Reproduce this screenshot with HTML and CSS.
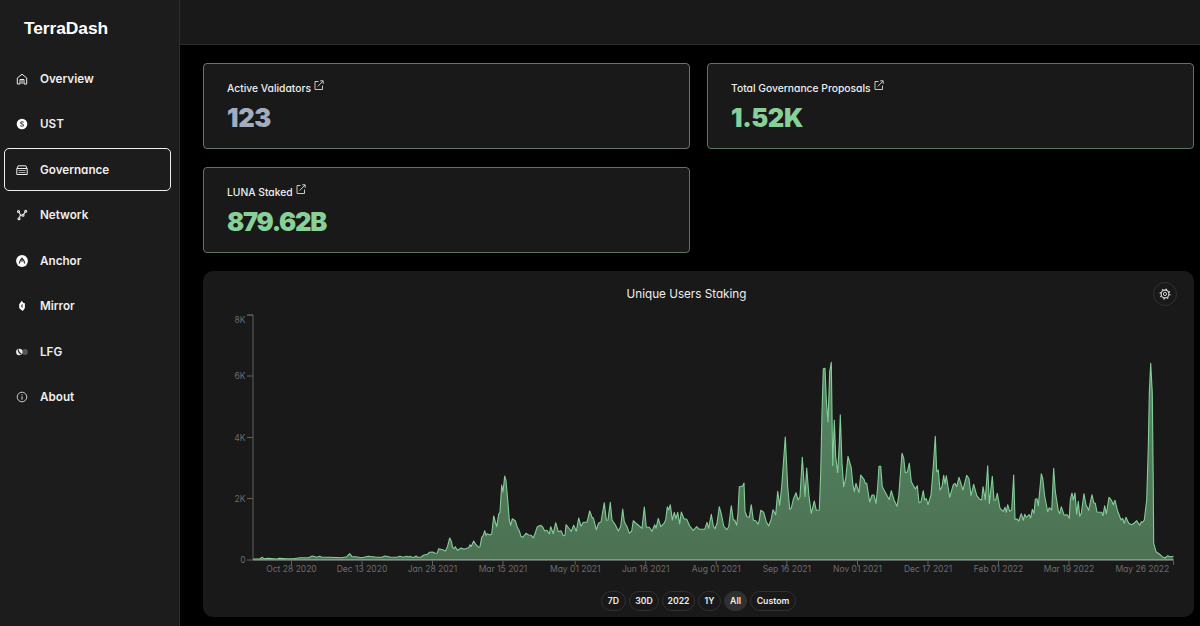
FILE: index.html
```html
<!DOCTYPE html>
<html lang="en">
<head>
    <meta charset="UTF-8">
    <meta name="viewport" content="width=device-width, initial-scale=1.0">
    <title>TerraDash - Governance</title>
    <link rel="stylesheet" href="styles.css">
</head>
<body>
    <aside class="sidebar">
        <h1 class="brand">TerraDash</h1>
        <nav class="nav">
            <a class="nav-item">
                <svg class="nav-icon" viewBox="0 0 12 12" fill="none" stroke="#eee" stroke-width="1"><path d="M1.300 11V5L6 1.200 10.700 5v6H8V6.500H4V11zM6 7v4"/></svg>
                <span>Overview</span>
            </a>
            <a class="nav-item">
                <svg class="nav-icon" viewBox="0 0 12 12"><circle cx="6" cy="6" r="5.3" fill="#fff"/><path d="M7.6 4.4C7 3.5 4.6 3.5 4.6 4.8S7.5 6 7.5 7.2 5 8.6 4.3 7.500" fill="none" stroke="#444" stroke-width="1.1"/></svg>
                <span>UST</span>
            </a>
            <a class="nav-item active">
                <svg class="nav-icon" viewBox="0 0 12 12" fill="none" stroke="#eee"><path d="M2.200 1.800h7.600l1.400 3v5.700H.8V4.800z"/><path d="M1 4.500h10"/><path d="M2.500 6.500h7M2.500 8.500h7" stroke="#aaa"/></svg>
                <span>Governance</span>
            </a>
            <a class="nav-item">
                <svg class="nav-icon" viewBox="0 0 12 12" fill="none" stroke="#eee" stroke-width="1.1"><circle cx="2.5" cy="2.5" r="1"/><circle cx="9.7" cy="2.3" r="1"/><circle cx="3" cy="9.700" r="1"/><circle cx="7" cy="6.300" r="1"/><path d="M3 3.300 4.500 6 6 6.300M9.300 3.200 7.500 5.300M3.300 8.800 4.500 6"/></svg>
                <span>Network</span>
            </a>
            <a class="nav-item">
                <svg class="nav-icon" viewBox="0 0 12 12"><circle cx="6" cy="6" r="5.9" fill="#fff"/><path d="M3.300 8.500C3.500 6 4.500 4.500 6 3.200 7.600 4.500 8.600 6 8.700 8.500M6 5.200v1.600" fill="none" stroke="#333" stroke-width="1.400"/></svg>
                <span>Anchor</span>
            </a>
            <a class="nav-item">
                <svg class="nav-icon" viewBox="0 0 12 12"><path d="M5.800.8 7.500 3l1.400.3v4.700L6.800 11 5 9.700 3.200 8V4.200z" fill="#fff"/><path d="M6.500 4v4L5.400 7V5z" fill="#222"/></svg>
                <span>Mirror</span>
            </a>
            <a class="nav-item">
                <svg class="nav-icon" viewBox="0 0 12 12"><circle cx="8.9" cy="6" r="3" fill="#555"/><circle cx="3.3" cy="6" r="3.200" fill="#eee"/><path d="M2 3.400C2.500 6 3.500 7.500 5.500 8.500" fill="none" stroke="#222" stroke-width="1.200"/></svg>
                <span>LFG</span>
            </a>
            <a class="nav-item">
                <svg class="nav-icon" viewBox="0 0 12 12" fill="none" stroke="#ddd"><circle cx="6" cy="6" r="4.8" stroke-width=".9"/><path d="M6 5.300v3.400M6 3.300v1"/></svg>
                <span>About</span>
            </a>
        </nav>
    </aside>

    <div class="page">
        <header class="topbar"></header>
        <main class="content">
            <section class="stats">
                <div class="stat neutral">
                    <div class="stat-title"><span>Active Validators</span><svg class="ext" viewBox="0 0 10 10"><path d="M4.500 1.500H1v8h7.500V5.500M3.700 6.500 9 1M6.200.8h3v3"/></svg></div>
                    <div class="stat-value">123</div>
                </div>
                <div class="stat">
                    <div class="stat-title"><span>Total Governance Proposals</span><svg class="ext" viewBox="0 0 10 10"><path d="M4.500 1.500H1v8h7.500V5.500M3.700 6.500 9 1M6.200.8h3v3"/></svg></div>
                    <div class="stat-value">1.52K</div>
                </div>
                <div class="stat">
                    <div class="stat-title"><span>LUNA Staked</span><svg class="ext" viewBox="0 0 10 10"><path d="M4.500 1.500H1v8h7.500V5.500M3.700 6.500 9 1M6.200.8h3v3"/></svg></div>
                    <div class="stat-value long">879.62B</div>
                </div>
            </section>

            <section class="panel">
                <div class="panel-head">
                    <span></span>
                    <h2 class="panel-title">Unique Users Staking</h2>
                    <button class="settings" aria-label="Settings">
                        <svg viewBox="0 0 12 12" fill="none" stroke="#ddd"><circle cx="6" cy="6" r="3.900" stroke-width="1.100"/><circle cx="6" cy="6" r="1.600" stroke-width=".9"/><circle cx="6" cy="6" r="4.900" stroke-width="1.100" stroke-dasharray="1.500 2.348"/></svg>
                    </button>
                </div>
                <svg class="chart" id="chart" viewBox="203 310 991 270">
                    <defs>
                        <linearGradient id="fill" gradientUnits="userSpaceOnUse" x1="0" y1="360" x2="0" y2="560">
                            <stop offset="0" stop-color="#548763"/>
                            <stop offset="1" stop-color="#4c7153"/>
                        </linearGradient>
                    </defs>
                    <path id="area" fill="url(#fill)"/>
                    <g id="axes" class="axes"></g>
                    <path id="line" class="line"/>
                    <path class="line base" d="M253 559.500H1173.500"/>
                </svg>
                <div class="ranges">
                    <button class="range">7D</button>
                    <button class="range w30">30D</button>
                    <button class="range w33">2022</button>
                    <button class="range w23">1Y</button>
                    <button class="range w23 selected">All</button>
                    <button class="range w46">Custom</button>
                </div>
            </section>
        </main>
    </div>

    <script src="chart.js"></script>
</body>
</html>
```
FILE: chart.js
```js
(function() {
    const BASE = 560
    const LEFT = 253

    // each part: origin in the plot, then x,y pairs in thirds of a unit
    const parts = [
        [220, 460, '100,297 120,296 127,292 132,296 145,295 170,297 178,295 200,296 220,296 240,293 265,293 277,288 290,292 299,289 305,292 330,292 365,293 380,290 389,281 396,290 407,290 425,293 445,289 470,292 485,292 495,288 510,291 530,292 540,289 550,292 560,289 565,292 570,289 575,292 583,292 588,288 593,292 603,291 612,285 622,283 628,277 638,276 645,280 652,279 656,266 668,269 676,273 682,262 689,234'],
        [450, 460, '4,244 8,262 12,266 16,260 22,271 34,264 42,268 52,264 56,263 60,254 63,260 71,243 78,254 86,262 90,260 95,232 100,226 104,212 108,226 112,221 120,225 125,222 131,168 136,186 140,200 146,162 150,156 155,75 159,96 164,48 168,62 173,120 178,180 182,196 187,176 196,182 202,202 208,213 213,229 218,232 228,220 236,225 244,226 250,234 256,218 262,200 272,196 278,201 284,213 291,211 298,222 302,200 310,221 317,188 325,215 333,212 340,227 345,226 348,194 356,204 364,214 371,196 379,214 386,174 393,199 400,187 411,187 419,153 426,172 430,174 439,209 446,189 453,186 463,128 469,181 474,180 481,127 486,180 496,194 505,213 512,199 518,147 523,185 531,200 538,220 545,213 550,182 557,189 568,198 576,205 583,141 589,202 598,202 606,214 614,194 618,205 625,175 632,200 642,190 647,180 652,140 656,150 661,134 667,180 673,157 678,176 683,157 689,192 694,156 702,176 710,178 719,198'],
        [690, 340, '10,571 20,560 28,568 44,568 51,547 56,565 64,523 70,558 75,566 81,550 88,500 94,522 101,558 110,569 116,560 124,497 130,540 134,540 140,556 144,520 148,440 158,438 162,429 165,515 171,530 178,532 184,494 190,540 198,543 204,553 208,540 212,511 221,517 229,545 236,558 243,540 249,509 257,524 263,454 269,496 275,440 286,291 293,440 299,508 304,504 310,478 318,458 324,480 330,470 337,352 345,470 350,384 357,470 364,520 373,483 379,511 388,510 392,400 396,220 400,86 405,85 409,180 414,246 419,95 424,67 428,377 433,240 437,350 443,398 448,310 451,224 456,370 461,440 467,415 474,349 484,384 488,430 493,455 498,430 507,458 512,405 522,418 526,430 530,430 539,486 546,465 552,465 558,491 563,440 567,379 572,379 577,440 585,455 598,479 604,452 612,480 621,499 626,470 636,340 641,355 646,398 652,396 658,370 664,425 676,447 682,437 687,488 693,485 700,452 704,480 709,476 714,494 723,465 730,380 736,289 740,395 745,390 750,450 756,440 761,406 765,432 769,407'],
        [940, 340, '29,472 40,434 45,430 50,440 57,412 69,450 80,406 87,416 93,467 101,433 110,466 119,478 125,480 129,440 136,480 143,377 148,491 157,409 162,480 167,480 172,460 180,505 190,514 195,502 199,517 203,494 209,514 215,510 221,405 225,538 232,537 236,544 244,521 250,541 254,523 259,532 268,524 272,534 277,508 282,520 286,478 291,476 295,498 304,401 308,415 314,470 323,515 328,503 335,510 341,385 346,455 355,512 359,521 364,500 372,525 382,524 388,535 391,480 396,459 400,480 405,459 410,523 415,484 419,529 424,520 432,461 438,495 446,511 456,464 461,488 466,490 471,516 485,517 489,527 494,497 499,522 507,472 515,482 520,494 525,481 532,510 543,540 548,535 553,550 558,532 566,550 575,554 583,549 590,542 599,556 604,545 608,547 613,540 620,480 625,320 628,160 632,70 637,160 640,450 641,610 648,635 658,642 667,650 675,654 683,647 690,650 700,649']
    ]

    const points = parts.flatMap(([ox, oy, list]) => list.split(' ').map(pair => {
        const [x, y] = pair.split(',').map(Number)
        return (ox + x / 3).toFixed(1) + ' ' + (oy + y / 3).toFixed(1)
    }))
    const right = points[points.length - 1].split(' ')[0]

    document.getElementById('line').setAttribute('d', 'M' + points.join('L'))
    document.getElementById('area').setAttribute('d', `M${LEFT} ${BASE}L${points.join('L')}L${right} ${BASE}Z`)

    let axes = `<path d="M247 315H253V560M253 560.500H1173.500V565"/>`
    const yTicks = [['8K', 315, 323], ['6K', 376, 379], ['4K', 437.5, 440.5], ['2K', 498.5, 501.5], ['0', 560, 563]]
    yTicks.forEach(([label, y, textY]) => {
        axes += `<path d="M247 ${y}H253"/><text x="245.500" y="${textY}" text-anchor="end">${label}</text>`
    })

    const dates = ['Oct 28 2020', 'Dec 13 2020', 'Jan 28 2021', 'Mar 15 2021', 'May 01 2021', 'Jun 16 2021', 'Aug 01 2021', 'Sep 16 2021', 'Nov 01 2021', 'Dec 17 2021', 'Feb 01 2022', 'Mar 19 2022', 'May 26 2022']
    const xTicks = [291.5, 362, 432.5, 503, 575.2, 645.7, 716.3, 786.8, 857.5, 928, 998.5, 1069, 1142.3]
    dates.forEach((label, i) => {
        if (i < 12) axes += `<path d="M${xTicks[i]} 561V565"/>`
        axes += `<text x="${xTicks[i]}" y="572" text-anchor="middle">${label}</text>`
    })
    document.getElementById('axes').innerHTML = axes
})()
```
FILE: styles.css
```css
* {
    box-sizing: border-box;
}
body {
    margin: 0;
    height: 626px;
    display: flex;
    overflow: hidden;
    background-color: #000;
    color: #eee;
    font-family: Inter, "Liberation Sans", sans-serif;
    font-feature-settings: "cv11";
}
.sidebar {
    width: 180px;
    flex: none;
    background-color: #1c1c1c;
    border-right: 1px solid #2c2f2f;
}
.brand {
    margin: 0;
    padding: 18px 0 0 24px;
    height: 57px;
    font: bold 17.4px/21px "Liberation Sans", Arial, sans-serif;
    letter-spacing: -0.08px;
    color: #fff;
}
.nav {
    display: flex;
    flex-direction: column;
    gap: 2.5px;
    padding: 0 8px 0 4px;
    margin-top: -0.5px;
}
.nav-item {
    height: 43px;
    display: flex;
    align-items: center;
    gap: 12px;
    padding: 1px 0 0 11px;
    border: 1px solid transparent;
    border-radius: 5px;
    font-size: 11.7px;
    font-weight: 600;
}
.nav-item.active {
    border-color: #eee;
}
.nav-icon {
    width: 12px;
    height: 12px;
}
.page {
    flex: 1;
    min-width: 0;
}
.topbar {
    height: 45px;
    background-color: #191919;
    border-bottom: 1px solid #2c2f2f;
}
.content {
    padding: 18px 6px 0 23px;
}
.stats {
    display: grid;
    grid-template-columns: 1fr 1fr;
    gap: 18px 17px;
}
.stat {
    height: 86px;
    padding: 15px 23px;
    background-color: #191919;
    border: 1px solid #56785f;
    border-radius: 4px;
    color: #87d098;
}
.stat.neutral {
    border-color: #6b7372;
    color: #a3adbd;
}
.stat-title {
    display: flex;
    gap: 3px;
    color: #eee;
    font-size: 10.3px;
    line-height: 18px;
    font-weight: 500;
}
.ext {
    width: 10px;
    height: 10px;
    margin-top: 1px;
    fill: none;
    stroke: #ddd;
    stroke-width: 0.9;
}
.stat-value {
    margin-top: 3px;
    font-size: 25.5px;
    line-height: 36px;
    font-weight: 900;
    letter-spacing: -0.4px;
}
.stat-value.long {
    letter-spacing: -1.3px;
}
.panel {
    height: 346px;
    margin-top: 18px;
    background-color: #191919;
    border-radius: 10px;
}
.panel-head {
    display: grid;
    grid-template-columns: 24px 1fr 24px;
    align-items: center;
    height: 39px;
    padding: 7px 17px 0;
}
.panel-title {
    margin: 0 0 0 -23px;
    padding-right: 23px;
    text-align: center;
    font-size: 11.7px;
    font-weight: 400;
    transform: translateX(11px);
}
.settings {
    display: flex;
    align-items: center;
    justify-content: center;
    width: 24px;
    height: 24px;
    padding: 0;
    background: none;
    border: 1px solid #303030;
    border-radius: 50%;
}
.settings svg {
    width: 12px;
    height: 12px;
}
.chart {
    display: block;
    width: 991px;
    height: 270px;
}
.line {
    fill: none;
    stroke: #83cd98;
    stroke-width: 1.1;
    stroke-linejoin: round;
}
.line.base {
    stroke: #6fa57d;
    stroke-width: 1;
}
.axes path {
    fill: none;
    stroke: #606060;
    stroke-width: 1;
}
.axes text {
    fill: #6c6c6c;
    font-size: 8.5px;
}
.ranges {
    display: flex;
    justify-content: center;
    gap: 3px;
    padding-top: 11px;
}
.range {
    width: 25px;
    height: 20px;
    padding: 0;
    background: none;
    border: 1px solid #303030;
    border-radius: 10px;
    color: #eee;
    font: 600 8.7px Inter, sans-serif;
    font-feature-settings: "cv11";
}
.range.w23 {
    width: 23px;
}
.range.w30 {
    width: 30px;
}
.range.w33 {
    width: 33px;
}
.range.w46 {
    width: 46px;
}
.range.selected {
    background-color: #303030;
}
```
